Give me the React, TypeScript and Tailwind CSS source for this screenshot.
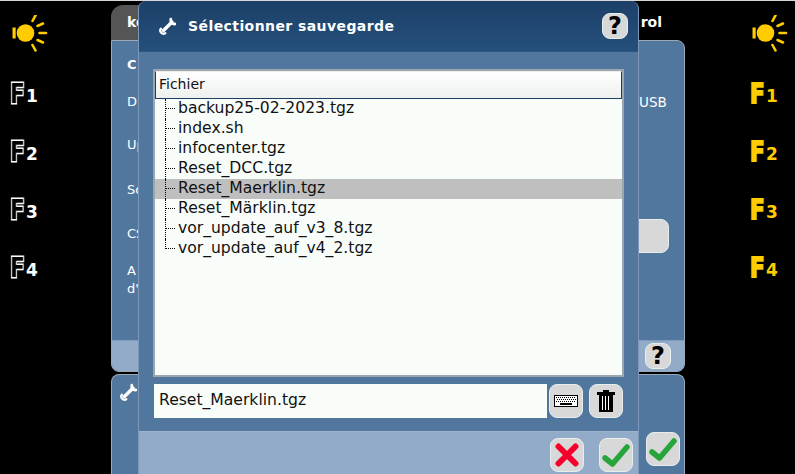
const FONT = "[font-family:'DejaVu_Sans',sans-serif]";

const files = [
  "backup25-02-2023.tgz",
  "index.sh",
  "infocenter.tgz",
  "Reset_DCC.tgz",
  "Reset_Maerklin.tgz",
  "Reset_Märklin.tgz",
  "vor_update_auf_v3_8.tgz",
  "vor_update_auf_v4_2.tgz",
];

function Sun() {
  return (
    <svg width="36" height="37" viewBox="12 15 36 37" className="ml-[1px] block">
      <circle cx="25.5" cy="33" r="8.8" fill="#ffcc00" />
      <rect x="12.5" y="27.5" width="3.2" height="11" fill="#ffcc00" />
      <g stroke="#ffcc00" strokeWidth="2.6" strokeLinecap="round">
        <path d="M32.5 21 L35.5 15.5" />
        <path d="M37.5 26 L43 23.5" />
        <path d="M39.5 33 L46 33" />
        <path d="M37.5 40 L43 42.5" />
        <path d="M32.5 45 L35.5 50.5" />
      </g>
    </svg>
  );
}

function FKey({ n, on }: { n: number; on?: boolean }) {
  return (
    <div className={`flex h-[21px] items-end ${FONT} font-bold ${on ? "text-[#ffcc00]" : "text-white"}`}>
      <span
        className={`-ml-[1px] inline-block w-[14px] origin-left scale-x-[0.8] text-[27px] leading-[21px] will-change-transform [paint-order:stroke_fill] ${
          on
            ? "[-webkit-text-stroke:2px_#ffcc00]"
            : "text-black [-webkit-text-stroke:2.8px_white]"
        }`}
      >
        F
      </span>
      <span className="ml-[2px] text-[17px] leading-[15px]">{n}</span>
    </div>
  );
}

function KeyColumn({ on, className }: { on?: boolean; className: string }) {
  return (
    <div className={`flex flex-col ${className}`}>
      <Sun />
      <div className="mt-[31px] flex flex-col gap-[37px]">
        {[1, 2, 3, 4].map((n) => (
          <FKey key={n} n={n} on={on} />
        ))}
      </div>
    </div>
  );
}

function Wrench() {
  return (
    <svg width="18" height="18" viewBox="0 0 18 18" className="block">
      <g fill="none" stroke="white" strokeLinecap="round">
        <path d="M4.5 13.5 L13 5" strokeWidth="3.4" />
        <path d="M11.8 2.2 A3.8 3.8 0 0 0 15.8 7" strokeWidth="2.8" />
        <path d="M1.8 11.8 A3.2 3.2 0 0 0 6.2 16.2" strokeWidth="2.4" />
      </g>
    </svg>
  );
}

function Btn({ children, className = "" }: { children?: React.ReactNode; className?: string }) {
  return (
    <div
      className={`flex items-center justify-center rounded-lg border border-[#e6eeee] bg-[#d8d8d8] ${className}`}
    >
      {children}
    </div>
  );
}

function Check() {
  return (
    <svg width="28" height="24" viewBox="0 0 28 24" className="block">
      <path
        d="M3 15 L10.5 21 L25 4"
        fill="none"
        stroke="#27a53a"
        strokeWidth="5.5"
        strokeLinecap="round"
        strokeLinejoin="round"
      />
    </svg>
  );
}

function Cross() {
  return (
    <svg width="24" height="24" viewBox="0 0 24 24" className="block">
      <path d="M3.5 3.5 L20.5 20.5 M20.5 3.5 L3.5 20.5" stroke="#f5002d" strokeWidth="6" strokeLinecap="round" />
    </svg>
  );
}

function Keyboard() {
  const keys = [];
  for (let r = 0; r < 3; r++) {
    for (let c = 0; c < 10; c++) {
      keys.push(<rect key={`${r}-${c}`} x={2 + c * 2 + (r % 2)} y={2 + r * 2} width="1" height="1" fill="black" />);
    }
  }
  return (
    <svg width="24" height="12" viewBox="0 0 24 12" className="block">
      <rect x="0.5" y="0.5" width="23" height="11" fill="white" stroke="black" />
      {keys}
      <rect x="6" y="8" width="12" height="2" fill="black" />
    </svg>
  );
}

function Trash() {
  return (
    <svg width="18" height="22" viewBox="0 0 18 22" className="block">
      <rect x="0" y="2" width="18" height="3" fill="black" />
      <rect x="6" y="0" width="6" height="3" fill="black" />
      <rect x="2" y="5" width="14" height="17" fill="black" />
      <path d="M5.5 6 V20 M8.5 6 V20 M11.5 6 V20" stroke="white" strokeWidth="1" />
    </svg>
  );
}

function HelpMark() {
  return <span className={`${FONT} text-[24px] font-bold leading-none text-black`}>?</span>;
}

function TreeRow({ name, last, selected }: { name: string; last: boolean; selected: boolean }) {
  return (
    <div className={`flex h-[20px] items-start pl-[10px] ${selected ? "bg-[#bfbfbf]" : ""}`}>
      <div
        className={`w-[10px] border-l border-dotted border-black ${last ? "h-[10px] border-b" : "h-[20px]"}`}
      >
        {!last && <div className="h-[10px] border-b border-dotted border-black" />}
      </div>
      <span className="ml-[3px] whitespace-nowrap text-[15.6px] leading-[18px] text-[#111]">{name}</span>
    </div>
  );
}

function BackPanel() {
  return (
    <div className={`flex h-full w-[574px] flex-col pt-[4px] text-white ${FONT}`}>
      {/* tabs */}
      <div className="flex h-[35px] items-center justify-between pr-[23px]">
        <div className="flex h-full w-[40px] items-center rounded-tl-xl bg-[#555] pl-[16px] pb-[1px] text-[14px] font-bold">
          ke
        </div>
        <span className="pb-[1px] text-[14px] font-bold">rol</span>
      </div>
      {/* main */}
      <div className="flex flex-1 flex-col overflow-hidden rounded-tr-lg rounded-br-lg rounded-bl-lg border border-[#9aa9b8] bg-[#52779f]">
        <div className="flex flex-1 justify-between text-[13.5px]">
          <div className="flex flex-col pl-[15px] text-[13px]">
            <span className="mt-[14px] font-bold leading-[20px]">C</span>
            <span className="mt-[17px] leading-[20px]">D</span>
            <span className="mt-[23px] leading-[20px]">Up</span>
            <span className="mt-[25px] leading-[20px]">So</span>
            <span className="mt-[24px] leading-[20px]">CS</span>
            <span className="mt-[18px] leading-[18px]">A</span>
            <span className="leading-[18px]">d'</span>
          </div>
          <div className="flex w-[46px] flex-col items-start">
            <span className="ml-[1px] mt-[51px] leading-[20px]">USB</span>
            <div className="mt-[107px] h-[34px] w-[31px] rounded-r-lg border border-[#e6eeee] bg-[#d8d8d8]" />
          </div>
        </div>
        <div className="flex h-[31px] items-center justify-end border-t border-[#7f9aba] bg-[#91abc8] pr-[13px]">
          <Btn className="h-[26px] w-[26px]">
            <HelpMark />
          </Btn>
        </div>
      </div>
      {/* second panel */}
      <div className="mt-[2px] flex h-[100px] items-start justify-between rounded-t-lg border border-b-0 border-[#9aa9b8] bg-[#52779f] pl-[8px] pr-[4px] pt-[8px]">
        <Wrench />
        <Btn className="mt-[49px] h-[34px] w-[34px]">
          <Check />
        </Btn>
      </div>
    </div>
  );
}

function FileDialog() {
  return (
    <div
      className={`absolute left-[138px] top-0 flex h-[473px] w-[501px] flex-col overflow-hidden rounded-t-lg border-x border-[#7d98b8] bg-[#52779f] ${FONT}`}
    >
      <div className="flex h-[51px] shrink-0 items-center justify-between border-b border-[#2d5680] bg-gradient-to-b from-[#1c4068] to-[#25507c] pl-[20px] pr-[10px]">
        <div className="flex items-center gap-[11px] text-[14px] font-bold tracking-[0.42px] text-white">
          <Wrench />
          <span>Sélectionner sauvegarde</span>
        </div>
        <Btn className="h-[26px] w-[26px]">
          <HelpMark />
        </Btn>
      </div>

      <div className="flex flex-1 flex-col px-[14px] pt-[17px]">
        <div className="h-[308px] border-2 border-[#9aa7ad] bg-[#f8fdfa]">
          <div className="h-[28px] border border-b-[#1d3f63] border-l-[#1d3f63] border-r-[#1d3f63] border-t-transparent bg-gradient-to-b from-white to-[#edf1ee] pl-[3px] text-[14px] leading-[25px] text-[#111]">
            Fichier
          </div>
          <div>
            {files.map((f, i) => (
              <TreeRow key={f} name={f} last={i === files.length - 1} selected={f === "Reset_Maerklin.tgz"} />
            ))}
          </div>
        </div>

        <div className="mt-[7px] flex h-[34px] pl-[1px]">
          <div className="w-[393px] bg-[#f8fdfa] pl-[5px] text-[15.6px] leading-[32px] text-[#111]">
            Reset_Maerklin.tgz
          </div>
          <Btn className="ml-[2px] h-[34px] w-[34px]">
            <Keyboard />
          </Btn>
          <Btn className="ml-[6px] h-[34px] w-[34px]">
            <Trash />
          </Btn>
        </div>
      </div>

      <div className="flex h-[43px] shrink-0 items-start justify-end gap-[15px] border-t border-[#a0b4cc] bg-[#91abc8] pr-[5px] pt-[6px]">
        <Btn className="h-[34px] w-[34px]">
          <Cross />
        </Btn>
        <Btn className="h-[34px] w-[34px]">
          <Check />
        </Btn>
      </div>
    </div>
  );
}

export default function App() {
  return (
    <div className="relative flex h-[474px] w-[795px] overflow-hidden border-t border-[#d8d8d8] bg-black">
      <KeyColumn className="w-[111px] pl-[11px] pt-[14px]" />
      <BackPanel />
      <KeyColumn on className="w-[110px] pl-[66px] pt-[14px]" />
      <FileDialog />
    </div>
  );
}
